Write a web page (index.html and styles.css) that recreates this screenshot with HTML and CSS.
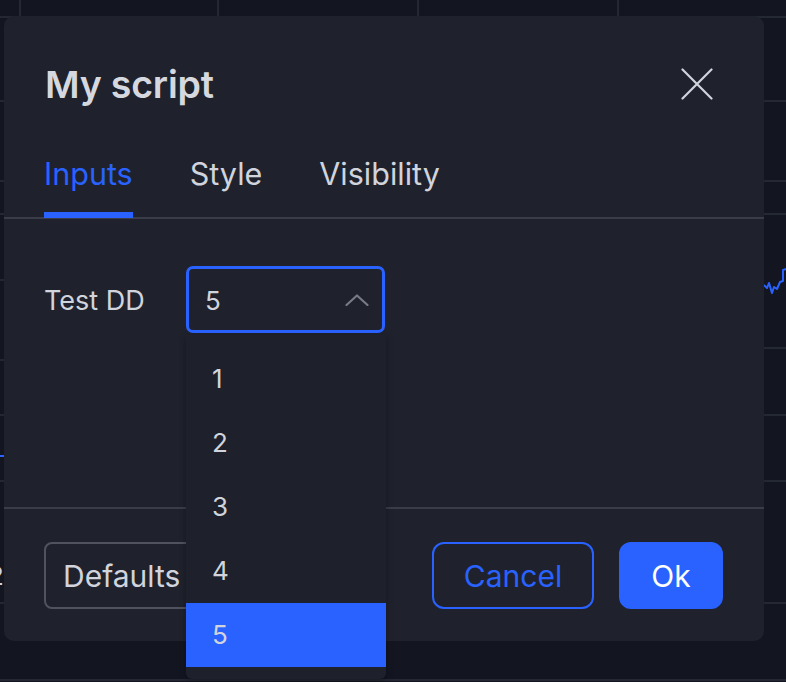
FILE: index.html
```html
<!DOCTYPE html>
<html lang="en">
<head>
<meta charset="utf-8">
<title>My script</title>
<link rel="stylesheet" href="styles.css">
</head>
<body>
<div class="stage">
  <svg class="chart" width="786" height="682" viewBox="0 0 786 682">
    <g stroke="#242833" stroke-width="2">
      <line x1="0" y1="17" x2="786" y2="17"/>
      <line x1="0" y1="101" x2="786" y2="101"/>
      <line x1="0" y1="181" x2="786" y2="181"/>
      <line x1="0" y1="214" x2="786" y2="214"/>
      <line x1="0" y1="280" x2="20" y2="280"/>
      <line x1="0" y1="360" x2="20" y2="360"/>
      <line x1="760" y1="348" x2="786" y2="348"/>
      <line x1="0" y1="415" x2="786" y2="415"/>
      <line x1="0" y1="481" x2="786" y2="481"/>
      <line x1="0" y1="603" x2="786" y2="603"/>
      <line x1="0" y1="680" x2="786" y2="680"/>
      <line x1="20" y1="0" x2="20" y2="17"/>
      <line x1="218" y1="0" x2="218" y2="17"/>
      <line x1="418" y1="0" x2="418" y2="17"/>
      <line x1="618" y1="0" x2="618" y2="17"/>
    </g>
    <polyline points="762,284 765,286 767,288 769,283 772,293 774,287 777,289 780,282 783,281 783,270 786,269" fill="none" stroke="#2962ff" stroke-width="2" stroke-linejoin="round"/>
    <line x1="0" y1="456" x2="5" y2="456" stroke="#2962ff" stroke-width="2"/>
  </svg>
  <span class="axis-label">2</span>

  <div class="dialog">
    <div class="header">
      <h1 class="title">My script</h1>
      <button class="close" aria-label="Close">
        <svg width="32" height="32" viewBox="0 0 32 32"><path d="M1.5 1.5 L30.5 30.5 M30.5 1.5 L1.5 30.5" stroke="#d1d4dc" stroke-width="2.2" stroke-linecap="round" fill="none"/></svg>
      </button>
    </div>

    <div class="tabs">
      <div class="tab active">Inputs</div>
      <div class="tab">Style</div>
      <div class="tab">Visibility</div>
    </div>

    <div class="content">
      <div class="row">
        <span class="label">Test DD</span>
        <div class="select">
          <div class="select-box">
            <span class="select-value">5</span>
            <svg class="chevron" width="24" height="12" viewBox="0 0 24 12"><polyline points="1.5,11 12,1.5 22.5,11" fill="none" stroke="#787b86" stroke-width="2.2" stroke-linecap="round" stroke-linejoin="round"/></svg>
          </div>
          <ul class="menu">
            <li class="item">1</li>
            <li class="item">2</li>
            <li class="item">3</li>
            <li class="item">4</li>
            <li class="item selected">5</li>
          </ul>
        </div>
      </div>
    </div>

    <div class="footer">
      <button class="btn defaults">Defaults
        <svg width="20" height="10" viewBox="0 0 20 10"><polyline points="1,1 10,9 19,1" fill="none" stroke="#787b86" stroke-width="2"/></svg>
      </button>
      <div class="actions">
        <button class="btn cancel">Cancel</button>
        <button class="btn ok">Ok</button>
      </div>
    </div>
  </div>
</div>
</body>
</html>
```

FILE: styles.css
```css
* {
  box-sizing: border-box;
}

html, body {
  margin: 0;
  padding: 0;
  background: #131621;
}

body {
  font-family: "Inter", "Noto Sans", "Liberation Sans", sans-serif;
  color: #d1d4dc;
}

.stage {
  position: relative;
  width: 786px;
  height: 682px;
  overflow: hidden;
  background: #131621;
}

.chart {
  position: absolute;
  left: 0;
  top: 0;
}

.axis-label {
  position: absolute;
  left: -12px;
  top: 560px;
  font-size: 26px;
  line-height: 32px;
  color: #d1d4dc;
}

.dialog {
  position: absolute;
  left: 4px;
  top: 16px;
  width: 760px;
  height: 625px;
  background: #1f222d;
  border-radius: 10px;
  display: flex;
  flex-direction: column;
}

.header {
  display: flex;
  align-items: center;
  justify-content: space-between;
  padding: 47px 51px 0 41px;
}

.title {
  margin: 0;
  font-size: 37.5px;
  line-height: 44px;
  font-weight: 600;
  color: #d6d8df;
  letter-spacing: -0.2px;
}

.close {
  width: 32px;
  height: 32px;
  padding: 0;
  border: 0;
  background: transparent;
  display: flex;
  margin-top: -3px;
}

.tabs {
  display: flex;
  gap: 57px;
  margin-top: 49px;
  padding: 0 40px;
  border-bottom: 2px solid #3a3d47;
}

.tab {
  font-size: 30.5px;
  line-height: 36px;
  padding: 0 0 20px;
  border-bottom: 6px solid transparent;
  color: #d1d4dc;
  margin-bottom: -1px;
}

.tab.active {
  color: #2962ff;
  border-bottom-color: #2962ff;
}

.content {
  height: 290px;
  padding: 47px 40px 0;
  border-bottom: 2px solid #3a3d47;
}

.row {
  display: flex;
  align-items: center;
}

.label {
  width: 142px;
  font-size: 27px;
  line-height: 32px;
  padding-top: 3px;
  color: #d1d4dc;
}

.select {
  position: relative;
  z-index: 2;
}

.select-box {
  width: 199px;
  height: 67px;
  border: 3px solid #2962ff;
  border-radius: 7px;
  display: flex;
  align-items: center;
  justify-content: space-between;
  padding: 0 13px 0 16px;
}

.select-value {
  font-size: 26px;
  line-height: 32px;
  padding-top: 2px;
}

.chevron {
  display: block;
}

.menu {
  position: absolute;
  left: 0;
  top: calc(100% + 2px);
  width: 200px;
  margin: 0;
  padding: 12px 0;
  list-style: none;
  background: #1e212b;
  border-radius: 0 0 6px 6px;
  box-shadow: 0 2px 6px rgba(0, 0, 0, 0.35);
}

.item {
  height: 64px;
  display: flex;
  align-items: center;
  padding-left: 26px;
  font-size: 26px;
  line-height: 32px;
  color: #d1d4dc;
}

.item.selected {
  background: #2962ff;
}

.footer {
  display: flex;
  justify-content: space-between;
  align-items: center;
  padding: 33px 41px 0 40px;
}

.actions {
  display: flex;
  gap: 25px;
}

.btn {
  height: 67px;
  border-radius: 10px;
  font-family: inherit;
  font-size: 30px;
  line-height: 34px;
  display: flex;
  align-items: center;
  justify-content: center;
  padding: 0;
  background: transparent;
  border: 2px solid transparent;
}

.defaults {
  width: 200px;
  padding: 0 17px;
  gap: 20px;
  justify-content: flex-start;
  border-color: #50535e;
  color: #d1d4dc;
  border-radius: 8px;
}

.cancel {
  width: 162px;
  border-color: #2962ff;
  color: #2962ff;
  border-radius: 12px;
}

.ok {
  width: 104px;
  background: #2962ff;
  border-color: #2962ff;
  color: #ffffff;
  border-radius: 12px;
}
```
